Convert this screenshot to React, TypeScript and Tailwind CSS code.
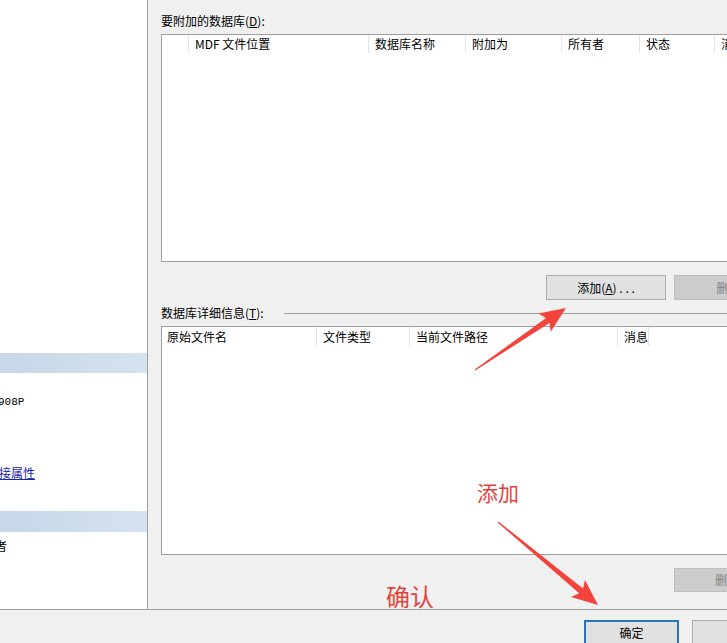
import React from "react";

const UI_FONT = "font-['Noto_Sans_CJK_SC',sans-serif]";

type ArrowProps = { x1: number; y1: number; x2: number; y2: number };

function Arrow({ x1, y1, x2, y2 }: ArrowProps) {
  const dx = x2 - x1;
  const dy = y2 - y1;
  const len = Math.hypot(dx, dy);
  const ux = dx / len;
  const uy = dy / len;
  const nx = -uy;
  const ny = ux;
  const headLen = 26;
  const bx = x2 - ux * headLen;
  const by = y2 - uy * headLen;
  const pt = (x: number, y: number) => `${x.toFixed(1)},${y.toFixed(1)}`;
  const points = [
    pt(x1 + nx * 0.6, y1 + ny * 0.6),
    pt(bx + ux * 4 + nx * 3, by + uy * 4 + ny * 3),
    pt(bx + nx * 11, by + ny * 11),
    pt(x2, y2),
    pt(bx - nx * 11, by - ny * 11),
    pt(bx + ux * 4 - nx * 3, by + uy * 4 - ny * 3),
    pt(x1 - nx * 0.6, y1 - ny * 0.6),
  ].join(" ");
  return <polygon points={points} fill="#f2443d" />;
}

function Col({ w, label, first }: { w?: number; label: string; first?: boolean }) {
  return (
    <div
      className={`flex h-full shrink-0 items-center border-r border-[#e5e5e5] ${first ? "pl-[5px]" : "pl-[6px]"}`}
      style={w ? { width: w } : undefined}
    >
      {label}
    </div>
  );
}

function Btn({ children, disabled }: { children: React.ReactNode; disabled?: boolean }) {
  return (
    <div
      className={`flex h-full w-[120px] items-center justify-center border text-[12px] ${
        disabled
          ? "border-[#bfbfbf] bg-[#cccccc] pl-[4px] text-[#838383]"
          : "border-[#adadad] bg-[#e1e1e1] text-black"
      }`}
    >
      {children}
    </div>
  );
}

export default function App() {
  return (
    <div className={`relative h-[643px] w-[727px] overflow-hidden bg-[#f0f0f0] text-[12px] text-black ${UI_FONT}`}>
      <div className="flex h-[609px]">
        {/* left info panel */}
        <div className="flex w-[148px] shrink-0 flex-col border-r border-[#a0a0a0] bg-white">
          <div className="mt-[353px] h-[20px] bg-gradient-to-r from-[#c7d7e8] to-[#d5e2ef]" />
          <div className="ml-[-2px] mt-[21px] font-['Liberation_Mono',monospace] text-[11px] leading-[16px]">
            908P
          </div>
          <div className="ml-[-1px] mt-[55px] leading-[16px] text-[#1a22a8] underline">接属性</div>
          <div className="mt-[30px] h-[21px] bg-gradient-to-r from-[#c7d7e8] to-[#d5e2ef]" />
          <div className="ml-[-5px] mt-[6px] leading-[16px]">者</div>
        </div>

        {/* right area */}
        <div className="flex-1 overflow-hidden pl-[13px] pt-[13px]">
          <div className="flex w-[633px] flex-col">
            <div className="leading-[16px]">
              要附加的数据库(<span className="underline">D</span>):
            </div>
            <div className="mt-[5px] h-[228px] border border-[#a0a0a0] bg-white">
              <div className="flex h-[18px] text-[12px]">
                <Col w={27} label="" />
                <Col w={180} label="MDF 文件位置" />
                <Col w={97} label="数据库名称" />
                <Col w={96} label="附加为" />
                <Col w={78} label="所有者" />
                <Col w={75} label="状态" />
                <Col label="消息" />
              </div>
            </div>
            <div className="mt-[13px] flex h-[25px] justify-end gap-[8px]">
              <Btn>
                添加(<span className="underline">A</span>)&nbsp;.&nbsp;.&nbsp;.
              </Btn>
              <Btn disabled>删除(R)</Btn>
            </div>
            <div className="mt-[5px] flex items-center gap-[20px] leading-[16px]">
              <span>
                数据库详细信息(<span className="underline">T</span>):
              </span>
              <div className="h-px flex-1 bg-[#a0a0a0]" />
            </div>
            <div className="mt-[5px] h-[229px] border border-[#a0a0a0] bg-white">
              <div className="flex h-[19px]">
                <Col w={155} label="原始文件名" first />
                <Col w={93} label="文件类型" />
                <Col w={208} label="当前文件路径" />
                <Col label="消息" />
              </div>
            </div>
            <div className="mt-[13px] flex h-[24px] justify-end">
              <Btn disabled>删除(M)</Btn>
            </div>
          </div>
        </div>
      </div>

      {/* bottom bar */}
      <div className="flex h-[34px] gap-[13px] border-t border-[#a0a0a0] pl-[584px] pt-[10px]">
        <div className="flex h-[26px] w-[95px] shrink-0 items-center justify-center border-2 border-[#2a76bd] bg-[#e1e1e1]">
          确定
        </div>
        <div className="flex h-[26px] w-[95px] shrink-0 items-center justify-center border border-[#adadad] bg-[#e1e1e1]">
          取消
        </div>
      </div>

      {/* annotations */}
      <div className="absolute left-[477px] top-[478px] text-[21px] leading-[28px] text-[#e2443c]">添加</div>
      <div className="absolute left-[386px] top-[580px] text-[24px] leading-[32px] text-[#e2443c]">确认</div>
      <svg className="pointer-events-none absolute left-0 top-0" width="727" height="643">
        <Arrow x1={475} y1={370} x2={566} y2={308} />
        <Arrow x1={498} y1={522} x2={598} y2={605} />
      </svg>
    </div>
  );
}
